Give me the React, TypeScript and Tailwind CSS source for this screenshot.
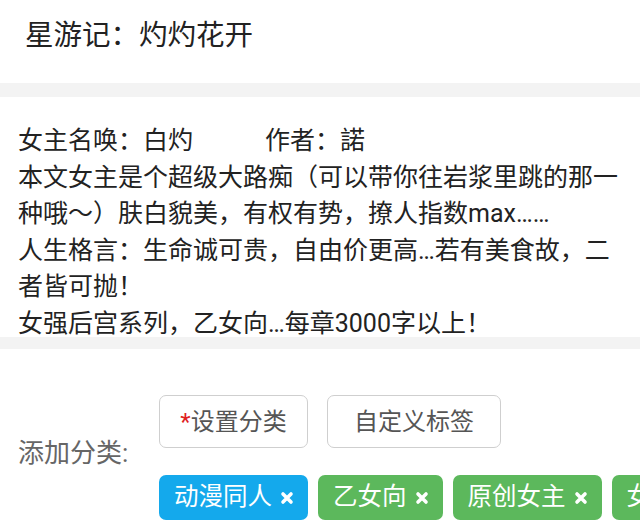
import React from 'react';

const bodyLines = [
  '本文女主是个超级大路痴（可以带你往岩浆里跳的那一',
  '种哦～）肤白貌美，有权有势，撩人指数max……',
  '人生格言：生命诚可贵，自由价更高…若有美食故，二',
  '者皆可抛！',
  '女强后宫系列，乙女向…每章3000字以上！',
];

const tags = [
  { label: '动漫同人', color: 'bg-[#14a9ec]' },
  { label: '乙女向', color: 'bg-[#5cb85c]' },
  { label: '原创女主', color: 'bg-[#5cb85c]' },
  { label: '女强', color: 'bg-[#5cb85c]' },
];

function RemoveIcon() {
  return (
    <svg width="14" height="14" viewBox="0 0 14 14" className="shrink-0">
      <path d="M3 3 L11 11 M11 3 L3 11" stroke="white" strokeWidth="3.6" strokeLinecap="round" />
    </svg>
  );
}

export default function App() {
  return (
    <div
      className="h-[532px] w-[640px] overflow-hidden bg-white text-[#222]"
      style={{ fontFamily: 'Roboto, "Noto Sans CJK SC", sans-serif' }}
    >
      {/* Title */}
      <div className="h-[83px] pl-[25px] pt-[18px] text-[28.5px] leading-[36px]">星游记：灼灼花开</div>

      <div className="h-[14px] bg-[#f3f3f3]" />

      {/* Synopsis */}
      <div className="h-[240px] overflow-hidden pl-[18px] pt-[26px] text-[25px] leading-[36.6px] text-[#222]">
        <div className="whitespace-nowrap">
          女主名唤：白灼<span className="ml-[72px]">作者：諾</span>
        </div>
        {bodyLines.map((line) => (
          <div key={line} className="whitespace-nowrap">
            {line}
          </div>
        ))}
      </div>

      <div className="h-[12px] bg-[#f3f3f3]" />

      {/* Categories */}
      <div className="flex items-center pl-[18px] pt-[46px]">
        <div className="mb-[8px] w-[141px] shrink-0 text-[26px] text-[#666]">添加分类:</div>
        <div className="flex flex-col gap-[27px]">
          <div className="flex gap-[19px]">
            <button className="flex h-[53px] w-[149px] items-center justify-center rounded-[7px] border border-[#cfcfcf] bg-white text-[24px] text-[#555]">
              <span className="text-[#e02020]">*</span>设置分类
            </button>
            <button className="flex h-[53px] w-[174px] items-center justify-center rounded-[7px] border border-[#cfcfcf] bg-white text-[24px] text-[#555]">
              自定义标签
            </button>
          </div>
          <div className="flex gap-[10px]">
            {tags.map((t) => (
              <div
                key={t.label}
                className={`flex h-[45px] shrink-0 items-center gap-[8px] rounded-[7px] pl-[15px] pr-[14px] text-[24.5px] text-white ${t.color}`}
              >
                <span>{t.label}</span>
                <RemoveIcon />
              </div>
            ))}
          </div>
        </div>
      </div>
    </div>
  );
}
